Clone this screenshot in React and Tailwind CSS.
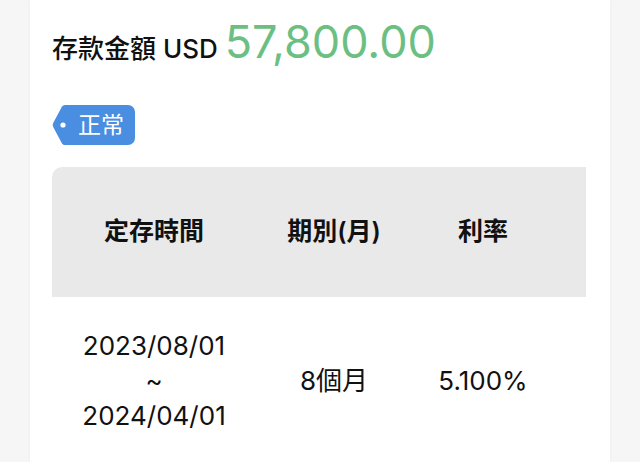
import React from "react";

const font = { fontFamily: "Inter, 'Noto Sans CJK TC', sans-serif" };

function Tag() {
  return (
    <div className="flex h-[40px] items-stretch">
      <svg width="15" height="40" viewBox="0 0 15 40" className="block">
        <path d="M15 0 L13 0 Q11 0 10 1.5 L1.2 18 Q0.2 20 1.2 22 L10 38.5 Q11 40 13 40 L15 40 Z" fill="#4a8ee2" />
        <circle cx="11" cy="20" r="2.6" fill="#ffffff" />
      </svg>
      <div className="flex items-center rounded-r-[7px] bg-[#4a8ee2] pl-[11px] pr-[11px] text-[23px] leading-none text-white">
        正常
      </div>
    </div>
  );
}

export default function App() {
  return (
    <div className="min-h-[462px] bg-[#f6f6f6]" style={font}>
      <div className="mx-[30px] min-h-[462px] bg-white pl-[22px] pr-[24px] pt-[19px] shadow-[0_0_3px_rgba(0,0,0,0.05)]">
        <div className="flex items-baseline">
          <span className="text-[26px] font-medium leading-none text-[#111]">存款金額 USD</span>
          <span className="ml-[7px] text-[45px] font-normal leading-none text-[#6cbf83]">57,800.00</span>
        </div>
        <div className="mt-[41px]">
          <Tag />
        </div>
        <div className="mt-[22px] overflow-hidden rounded-tl-[10px]">
          <div className="flex w-[700px] bg-[#e9e9e9] h-[130px] items-center text-[25px] font-semibold text-[#111]">
            <div className="w-[204px] text-center">定存時間</div>
            <div className="w-[156px] text-center">期別(月)</div>
            <div className="w-[142px] text-center">利率</div>
            <div className="flex-1"></div>
          </div>
          <div className="flex w-[700px] items-center pt-[31px] text-[26px] leading-[35px] text-[#111]">
            <div className="w-[204px] text-center">
              <div>2023/08/01</div>
              <div>~</div>
              <div>2024/04/01</div>
            </div>
            <div className="w-[156px] text-center">8個月</div>
            <div className="w-[142px] text-center">5.100%</div>
            <div className="flex-1"></div>
          </div>
        </div>
      </div>
    </div>
  );
}
